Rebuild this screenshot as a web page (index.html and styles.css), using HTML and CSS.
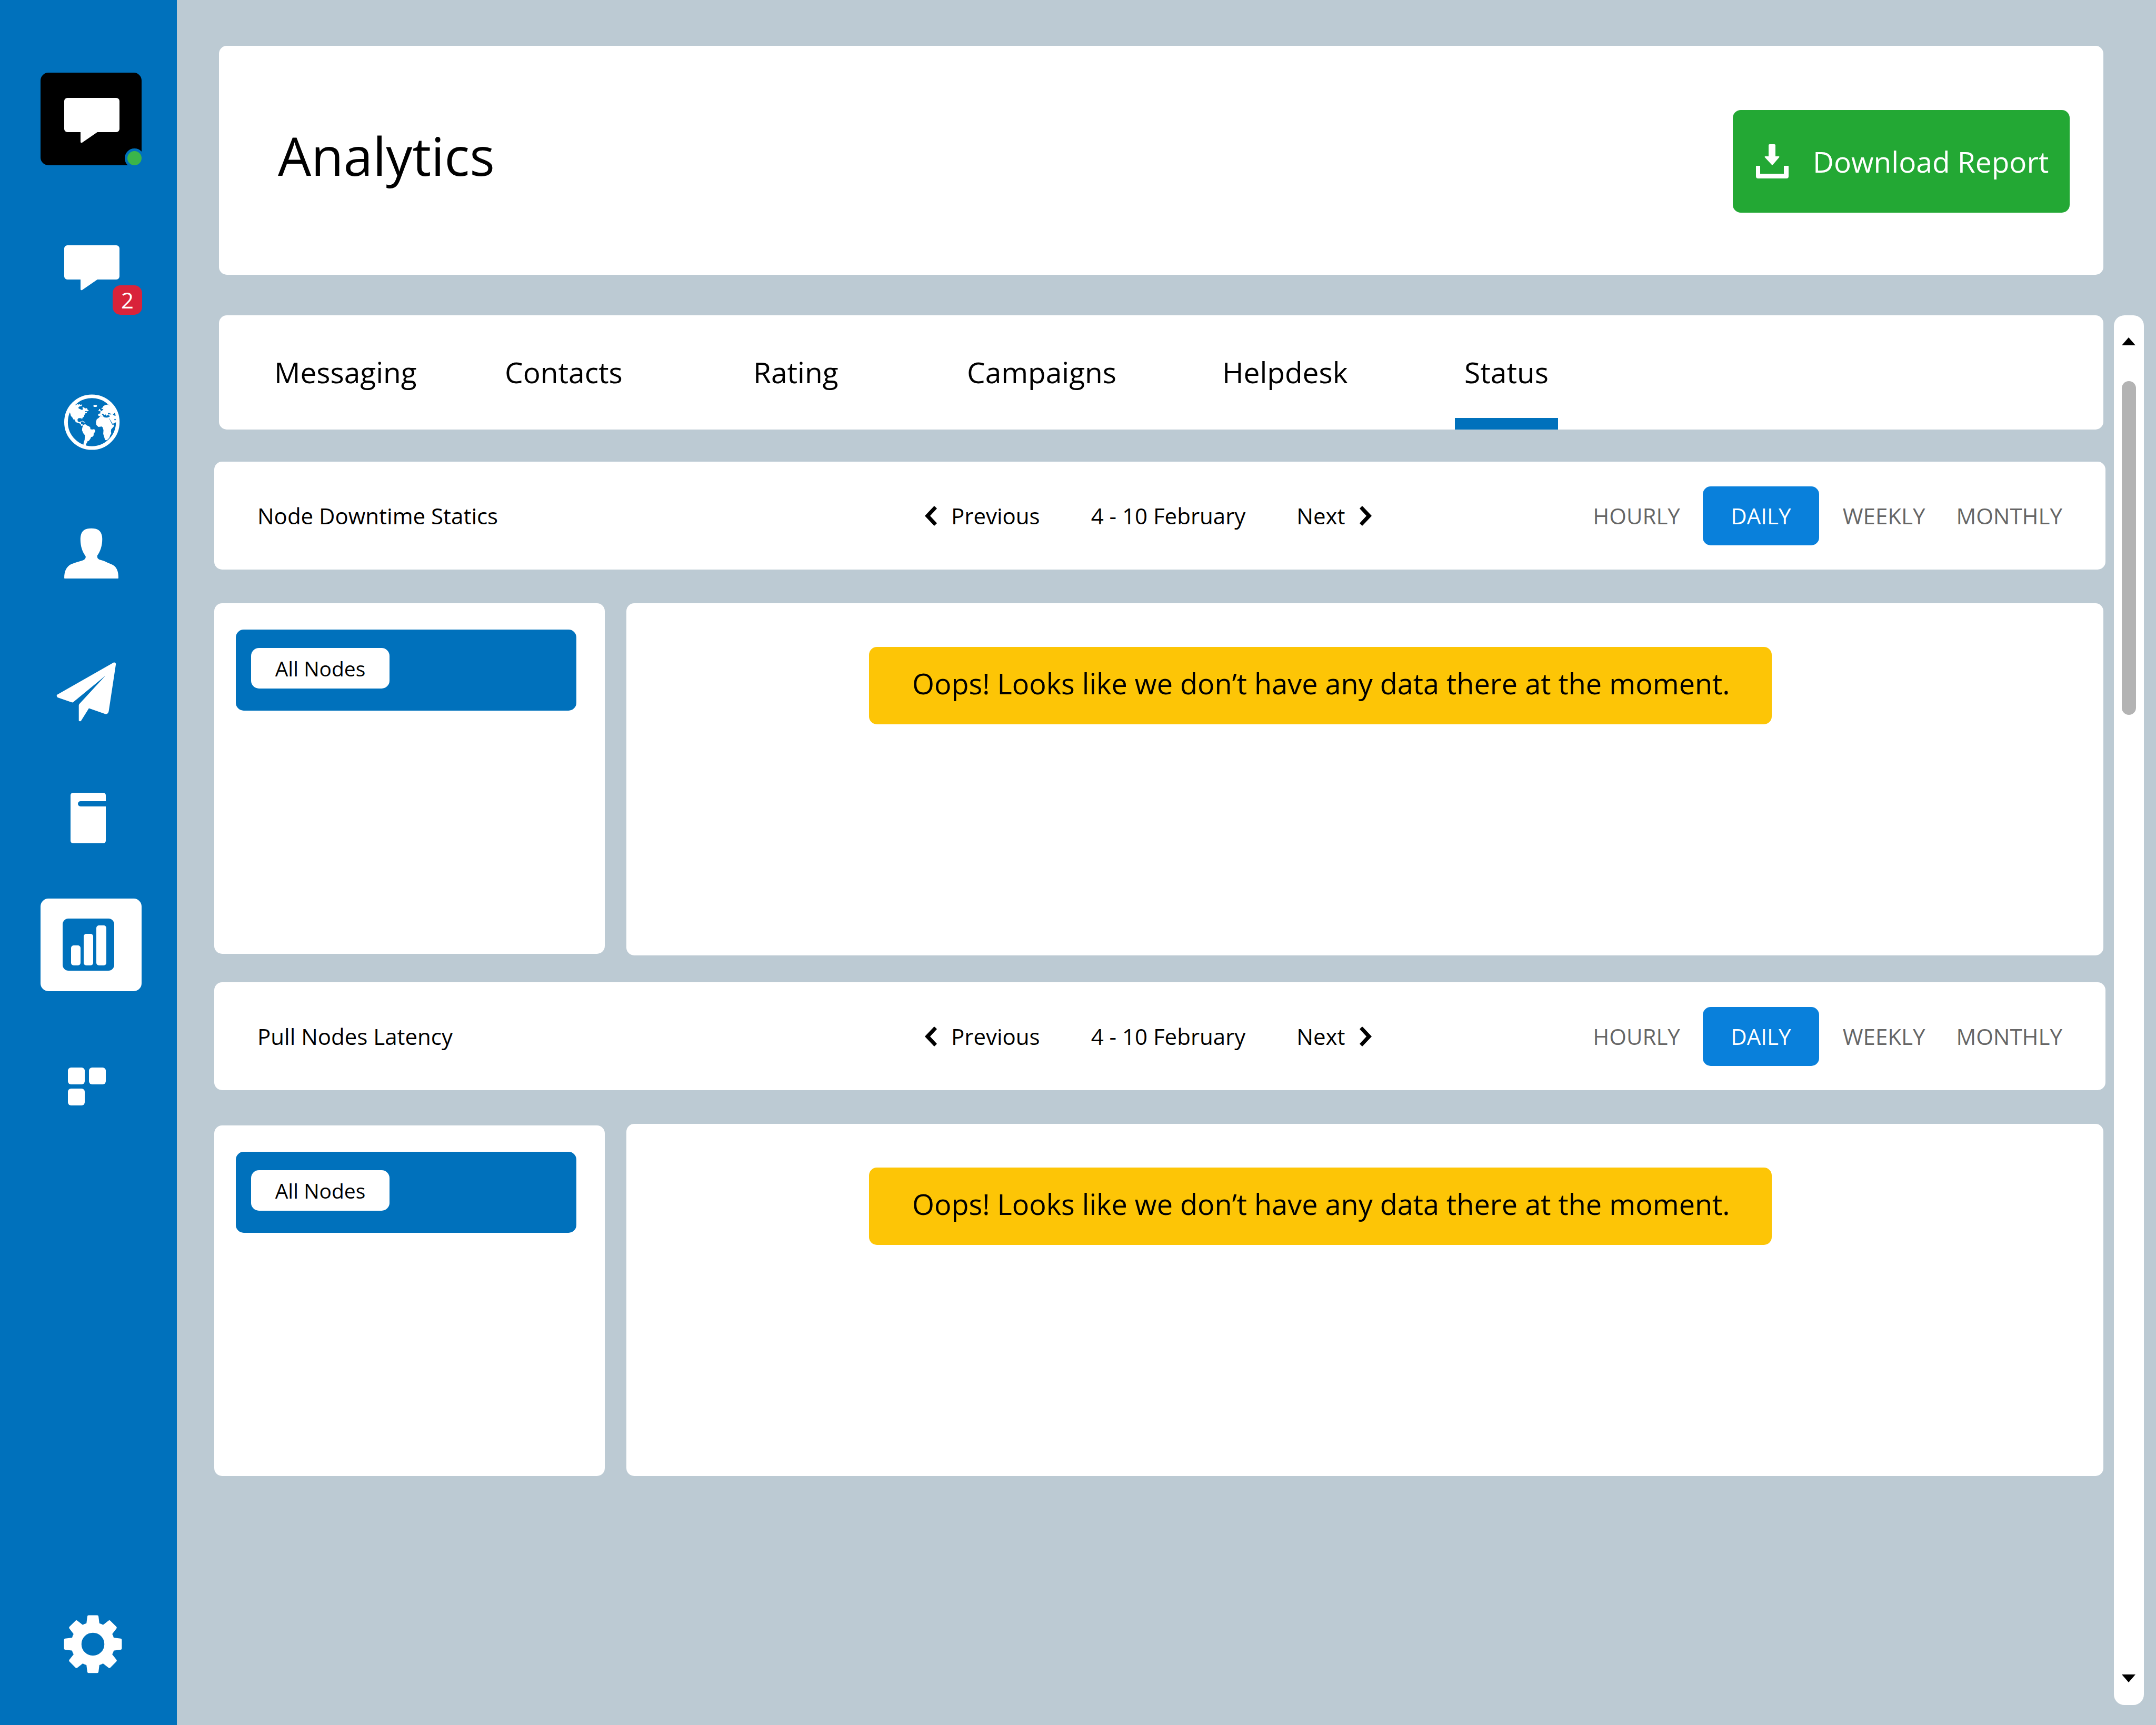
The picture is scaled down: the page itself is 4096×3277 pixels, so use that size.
FILE: index.html
```html
<!DOCTYPE html>
<html lang="en">
<head>
<meta charset="utf-8">
<title>Analytics</title>
<link rel="stylesheet" href="styles.css">
</head>
<body>
<svg class="sprite" aria-hidden="true">
  <symbol id="bubble" viewBox="0 0 192 176">
    <path d="M51 48h93a6 6 0 0 1 6 6v53a6 6 0 0 1-6 6h-36l-29 20q-2 1-3-1v-19H51a6 6 0 0 1-6-6V54a6 6 0 0 1 6-6z"/>
  </symbol>
  <symbol id="chevron" viewBox="0 0 24 38">
    <path d="M17 1q1-1 2 0l4 4L10 19l13 14-4 4q-1 1-2 0L0 19z"/>
  </symbol>
</svg>
<aside class="sidebar">
  <nav class="menu" aria-label="Main">
    <a class="tile tile-brand" href="#" aria-label="Account"><svg class="icon"><use href="#bubble"/></svg><span class="presence"></span></a>
    <a class="tile" href="#" aria-label="Messages"><svg class="icon"><use href="#bubble"/></svg><span class="count">2</span></a>
    <a class="tile" href="#" aria-label="World">
      <svg class="icon" viewBox="0 0 192 176"><g transform="translate(-.2 -7.5) scale(.256)">
        <circle cx="382" cy="373" r="192" fill="none" stroke="currentColor" stroke-width="27"/>
        <path d="M225 245L262 246 275 239 282 243 291 239 297 245 307 241 308 250 301 257 293 252 288 260 281 264 284 271 297 277 303 280 310 282 316 275 312 267 314 261 325 265 331 271 345 269 350 280 360 288 350 292 333 291 331 297 344 298 345 306 335 306 326 320 323 332 312 341 309 354 305 345 291 343 280 345 275 354 277 366 288 373 298 368 306 364 300 377 302 388 314 390 313 398 303 400 299 390 290 382 270 375 262 374 257 359 249 349 252 360 243 350 238 340 226 326 219 300 205 310z"/>
        <path d="M302 366L315 362 323 371 334 372 331 376 318 374 312 367z"/>
        <path d="M316 396L324 390 336 390 345 397 362 404 371 415 370 425 384 428 398 425 407 433 406 444 396 456 394 473 388 480 376 483 371 496 359 512 348 516 346 524 339 535 335 550 318 546 322 520 328 505 330 470 318 455 309 434 310 418z"/>
        <rect x="393" y="245" width="27" height="15" rx="7"/>
        <path d="M427 287l9-5-2-8 8 2 3 8 6 6-9 1zM452 269L464 264 466 255 480 246 500 242 540 270 566 310 572 365 560 374 536 386 528 372 510 344 492 341 478 339 470 326 454 327 442 332 446 322 440 328 430 325 428 312 446 308 445 302 440 295 450 292 462 283 468 274 456 275z"/>
        <path fill="#0071bc" d="M455 313l10-4 5 8 8 4 4-8 4 10 8 2 4-6 14 5 2 9-18 6-20-3-12-12zM501 307l7-3 8 5 9 2v5l-12-2-9 2zM536 310l8 2 6-8 5 4-1 6 5 5-3 8-8-4-8-4zM549 350l6-2 5 6-5 6-6-3z"/>
        <path d="M442 331L465 326 470 336 490 342 508 342 516 358 530 386 535 393 548 391 544 405 525 427 523 442 526 455 517 472 512 488 494 507 480 506 473 482 466 460 468 432 462 412 456 405 430 408 415 394 412 372 418 352 432 342z"/>
      </g></svg>
    </a>
    <a class="tile" href="#" aria-label="Contacts">
      <svg class="icon" viewBox="0 0 192 176"><g transform="translate(-15.6 4.6) scale(.256 .431)">
        <path d="M438 84C492 84 519 98 519 132C519 161 504 186 483 203C478 214 490 221 507 223C525 226 540 229 555 234L583 241C627 251 639 272 639 302Q639 305 636 305H240Q237 305 237 302C237 273 253 251 291 241L324 234L369 226C392 223 399 213 395 206C372 188 357 163 357 132C357 98 384 84 438 84z"/>
      </g></svg>
    </a>
    <a class="tile" href="#" aria-label="Campaigns">
      <svg class="icon" viewBox="0 0 192 176"><g transform="translate(-15.6 -258.4) scale(.256 .431)">
        <path d="M604 675Q620 673 620 683L567 890Q560 905 540 902L420 877 362 932Q355 937 345 932V864Q345 860 352 856L543 733 303 850Q298 852 290 850L188 829Q176 823 184 817z"/>
      </g></svg>
    </a>
    <a class="tile" href="#" aria-label="Notes">
      <svg class="icon" viewBox="0 0 192 176">
        <path d="M63 40h55q6 0 6 5v11H76a5 5 0 0 0 0 10h48v65q0 5-6 5H63q-6 0-6-5V45q0-5 6-5z"/>
      </svg>
    </a>
    <a class="tile tile-active" href="#" aria-label="Analytics" aria-current="page">
      <svg class="icon" viewBox="0 0 192 176">
        <rect x="42" y="38" width="98" height="99" rx="11"/>
        <g fill="#fff"><rect x="58" y="89" width="18" height="38" rx="5"/><rect x="82" y="67" width="18" height="60" rx="5"/><rect x="106" y="51" width="19" height="76" rx="5"/></g>
      </svg>
    </a>
    <a class="tile" href="#" aria-label="Apps">
      <svg class="icon" viewBox="0 0 192 176"><rect x="52" y="53" width="32" height="32" rx="6"/><rect x="92" y="53" width="32" height="32" rx="6"/><rect x="52" y="93" width="32" height="32" rx="6"/></svg>
    </a>
  </nav>
  <a class="tile" href="#" aria-label="Settings">
    <svg class="icon" viewBox="0 0 192 176">
      <defs><path id="tooth" d="M341 232L348 177Q349 168 358 168H421Q430 168 431 177L438 232z"/></defs>
      <g transform="translate(-.2 -9.5) scale(.256)">
        <circle cx="389.5" cy="382.5" r="123.5" fill="none" stroke="currentColor" stroke-width="77"/>
        <use href="#tooth"/>
        <use href="#tooth" transform="rotate(45 389.5 382.5)"/>
        <use href="#tooth" transform="rotate(90 389.5 382.5)"/>
        <use href="#tooth" transform="rotate(135 389.5 382.5)"/>
        <use href="#tooth" transform="rotate(180 389.5 382.5)"/>
        <use href="#tooth" transform="rotate(225 389.5 382.5)"/>
        <use href="#tooth" transform="rotate(270 389.5 382.5)"/>
        <use href="#tooth" transform="rotate(315 389.5 382.5)"/>
      </g>
    </svg>
  </a>
</aside>

<main class="main">
  <header class="card page-head">
    <h1>Analytics</h1>
    <button class="download" type="button">
      <svg class="download-icon" viewBox="0 0 62 65"><path d="M26 0h9q2 0 2 2v21h7q1 1 0 2L32 39q-1 1-2 0L17 25q-1-1 0-2h7V2q0-2 2-2zM1 41h7v15h45V41h8q1 0 1 1v19q0 4-4 4H4q-4 0-4-4V42q0-1 1-1z"/></svg>
      Download Report
    </button>
  </header>

  <div class="viewport">
    <div class="content">
      <nav class="card tabs" aria-label="Reports">
        <a class="tab" href="#">Messaging</a>
        <a class="tab" href="#">Contacts</a>
        <a class="tab" href="#">Rating</a>
        <a class="tab" href="#">Campaigns</a>
        <a class="tab" href="#">Helpdesk</a>
        <a class="tab tab-active" href="#" aria-current="page">Status</a>
      </nav>

      <section class="report">
        <div class="card toolbar">
          <h2>Node Downtime Statics</h2>
          <div class="range">
            <button type="button" class="step"><svg class="chevron"><use href="#chevron"/></svg>Previous</button>
            <span>4 - 10 February</span>
            <button type="button" class="step">Next<svg class="chevron chevron-next"><use href="#chevron"/></svg></button>
          </div>
          <div class="modes">
            <button type="button" class="mode">HOURLY</button>
            <button type="button" class="mode mode-active">DAILY</button>
            <button type="button" class="mode">WEEKLY</button>
            <button type="button" class="mode">MONTHLY</button>
          </div>
        </div>
        <div class="panels">
          <div class="card nodes"><div class="node-box"><button type="button" class="node">All Nodes</button></div></div>
          <div class="card chart"><p class="alert">Oops! Looks like we don’t have any data there at the moment.</p></div>
        </div>
      </section>

      <section class="report">
        <div class="card toolbar">
          <h2>Pull Nodes Latency</h2>
          <div class="range">
            <button type="button" class="step"><svg class="chevron"><use href="#chevron"/></svg>Previous</button>
            <span>4 - 10 February</span>
            <button type="button" class="step">Next<svg class="chevron chevron-next"><use href="#chevron"/></svg></button>
          </div>
          <div class="modes">
            <button type="button" class="mode">HOURLY</button>
            <button type="button" class="mode mode-active">DAILY</button>
            <button type="button" class="mode">WEEKLY</button>
            <button type="button" class="mode">MONTHLY</button>
          </div>
        </div>
        <div class="panels panels-end">
          <div class="card nodes"><div class="node-box"><button type="button" class="node">All Nodes</button></div></div>
          <div class="card chart"><p class="alert">Oops! Looks like we don’t have any data there at the moment.</p></div>
        </div>
      </section>
    </div>

    <div class="scrollbar">
      <button type="button" class="scroll-btn" aria-label="Scroll up"><svg class="arrow" viewBox="0 0 26 15"><path d="M13 0l13 15H0z"/></svg></button>
      <div class="thumb"></div>
      <button type="button" class="scroll-btn scroll-down" aria-label="Scroll down"><svg class="arrow" viewBox="0 0 26 15"><path d="M0 0h26L13 15z"/></svg></button>
    </div>
  </div>
</main>
</body>
</html>
```
FILE: styles.css
```css
:root {
  --blue: #0071bc;
  --radius: 15px;
}

* {
  box-sizing: border-box;
}

body {
  margin: 0;
  min-height: 100vh;
  display: flex;
  background: #bccad3;
  color: #000;
  font-family: "Open Sans", "Noto Sans", sans-serif;
  font-size: 42px;
  line-height: 56px;
}

h1,
h2,
p {
  margin: 0;
  font-weight: 400;
}

button {
  border: 0;
  padding: 0;
  background: none;
  color: inherit;
  font: inherit;
  white-space: nowrap;
  cursor: pointer;
}

a {
  color: inherit;
  text-decoration: none;
}

svg {
  display: block;
  fill: currentColor;
}

.sprite {
  position: absolute;
  width: 0;
  height: 0;
}

.card {
  background: #fff;
  border-radius: var(--radius);
}

/* Sidebar */

.sidebar {
  flex: 0 0 336px;
  display: flex;
  flex-direction: column;
  justify-content: space-between;
  padding: 138px 67px 66px 77px;
  background: var(--blue);
  color: #fff;
}

.menu {
  display: grid;
  grid-template-rows: 280px 296px 249px 263px 240px 241px 268px 176px;
}

.tile {
  position: relative;
  width: 192px;
  height: 176px;
  border-radius: var(--radius);
}

.tile-brand {
  background: #000;
}

.tile-active {
  background: #fff;
  color: var(--blue);
}

.icon {
  width: 192px;
  height: 176px;
}

.presence {
  position: absolute;
  right: -5px;
  bottom: -5px;
  width: 37px;
  height: 37px;
  border: 5px solid var(--blue);
  border-radius: 50%;
  background: #3bb54a;
}

.count {
  position: absolute;
  right: -1px;
  bottom: -4px;
  width: 56px;
  height: 56px;
  border-radius: var(--radius);
  background: #d9233a;
  text-align: center;
}

/* Main column */

.main {
  flex: 1;
  min-width: 0;
  display: flex;
  flex-direction: column;
  gap: 77px;
  padding: 87px 23px 38px 71px;
}

.page-head {
  display: flex;
  align-items: center;
  justify-content: space-between;
  height: 435px;
  margin: 0 77px 0 9px;
  padding: 4px 64px 0 112px;
}

.page-head h1 {
  padding-bottom: 24px;
  font-size: 100px;
  line-height: 136px;
}

.download {
  display: flex;
  align-items: center;
  gap: 46px;
  width: 640px;
  height: 195px;
  padding-left: 44px;
  border-radius: var(--radius);
  background: #23a834;
  color: #fff;
  font-size: 55px;
}

.download-icon {
  width: 62px;
  height: 65px;
}

.viewport {
  flex: 1;
  display: flex;
  gap: 16px;
}

.content {
  flex: 1;
  min-width: 0;
}

.tabs {
  display: grid;
  grid-template-columns: 438px 472px 406px 485px 458px auto;
  justify-items: start;
  height: 217px;
  margin: 0 4px 61px 9px;
  padding-left: 89px;
  font-size: 55px;
}

.tab {
  display: flex;
  align-items: center;
  padding: 20px 16px 22px;
}

.tab-active {
  justify-content: center;
  width: 196px;
  padding: 20px 0 0;
  border-bottom: 22px solid var(--blue);
}

/* Report sections */

.report {
  margin-bottom: 51px;
}

.toolbar {
  display: grid;
  grid-template-columns: 1268px 1fr auto;
  align-items: center;
  height: 205px;
  margin-bottom: 64px;
  padding: 0 82px;
}

.toolbar h2 {
  font-size: 42px;
}

.range {
  display: flex;
  gap: 97px;
}

.step {
  display: flex;
  align-items: center;
  gap: 26px;
}

.chevron {
  width: 24px;
  height: 38px;
}

.chevron-next {
  transform: scaleX(-1);
}

.modes {
  display: flex;
  align-items: center;
  gap: 59px;
  color: #666;
}

.mode-active {
  width: 221px;
  height: 112px;
  margin: 0 -14px 0 -16px;
  border-radius: var(--radius);
  background: #0980db;
  color: #fff;
}

.panels {
  display: flex;
  align-items: flex-start;
  gap: 41px;
  margin-right: 4px;
}

.panels-end {
  align-items: flex-end;
}

.nodes {
  flex: 0 0 742px;
  height: 666px;
  padding: 50px 54px 0 41px;
}

.node-box {
  height: 154px;
  padding: 35px 29px;
  border-radius: var(--radius);
  background: var(--blue);
}

.node {
  display: block;
  width: 263px;
  height: 77px;
  border-radius: var(--radius);
  background: #fff;
  font-size: 39px;
}

.chart {
  flex: 1;
  min-width: 0;
  height: 669px;
  padding: 83px 0 0 461px;
}

.alert {
  width: 1715px;
  height: 147px;
  padding: 41px 0 0 82px;
  border-radius: var(--radius);
  background: #fdc506;
  font-size: 54px;
  white-space: nowrap;
}

/* Scrollbar */

.scrollbar {
  flex: 0 0 57px;
  display: flex;
  flex-direction: column;
  align-items: center;
  border-radius: 20px;
  background: #fff;
}

.scroll-btn {
  width: 57px;
  height: 125px;
  padding: 0 15px 27px;
}

.scroll-down {
  height: 101px;
  margin-top: auto;
  padding-bottom: 0;
}

.arrow {
  width: 26px;
  height: 15px;
}

.thumb {
  width: 27px;
  height: 24%;
  border-radius: 14px;
  background: #b3b3b3;
}
```
